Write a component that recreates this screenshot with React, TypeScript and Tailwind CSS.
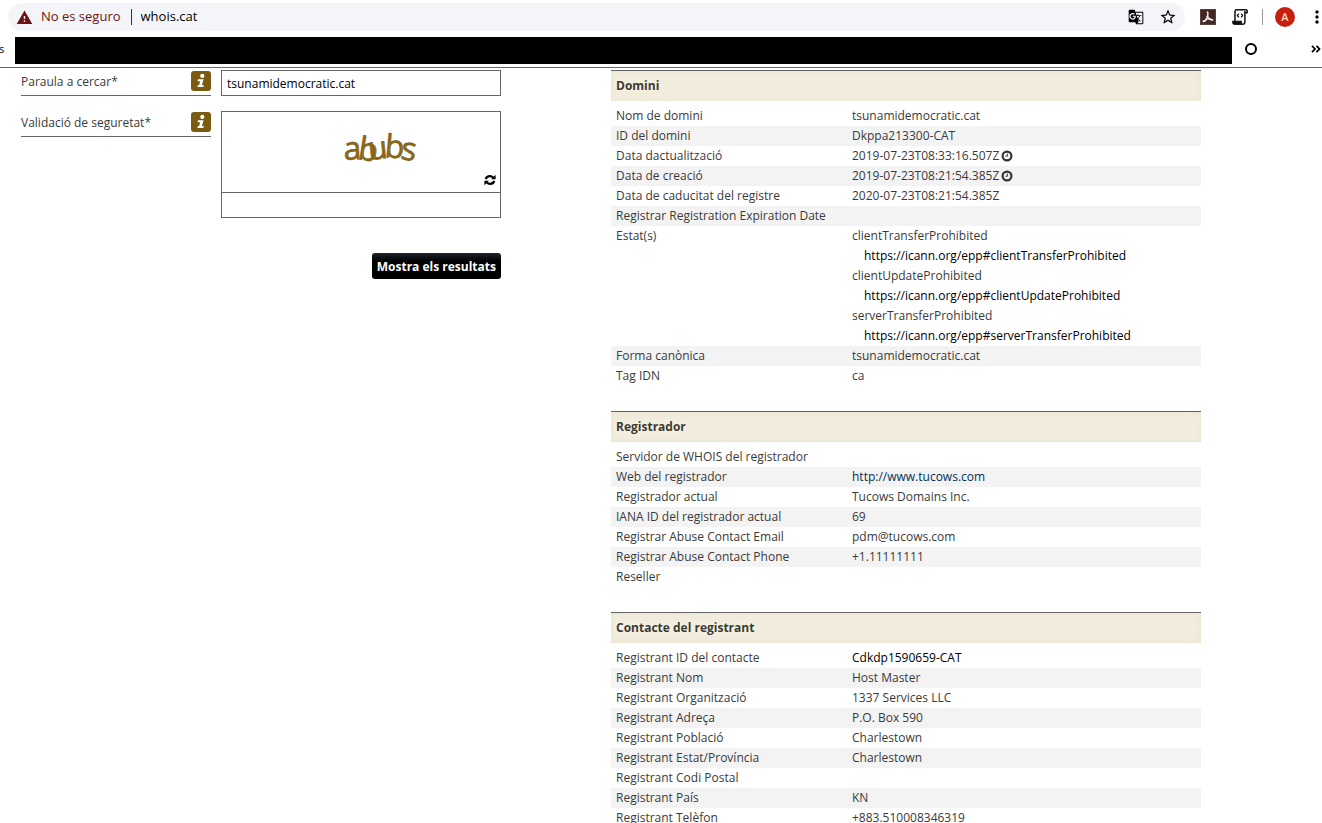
import { useState } from "react";
import type { ReactNode } from "react";
import { MdWarning, MdGTranslate, MdStarBorder, MdMoreVert } from "react-icons/md";

type Row = { label: string; value?: ReactNode };

function ClockIcon() {
  return (
    <svg viewBox="0 0 12 12" className="size-3" fill="none" stroke="#333" aria-hidden="true">
      <circle cx="6" cy="6" r="4.4" strokeWidth="2.2" />
      <path d="M6.300 3.600v2.700H4.400" strokeWidth="1" />
    </svg>
  );
}

function Stamp({ children }: { children: ReactNode }) {
  return (
    <span className="flex items-center gap-[2px]">
      {children}
      <ClockIcon />
    </span>
  );
}

function Status({ names }: { names: string[] }) {
  return (
    <ul>
      {names.map((name) => (
        <li key={name}>
          {name}
          <a className="block pl-3 text-black" href={`https://icann.org/epp#${name}`}>
            https://icann.org/epp#{name}
          </a>
        </li>
      ))}
    </ul>
  );
}

const domain: Row[] = [
  { label: "Nom de domini", value: "tsunamidemocratic.cat" },
  { label: "ID del domini", value: "Dkppa213300-CAT" },
  { label: "Data dactualització", value: <Stamp>2019-07-23T08:33:16.507Z</Stamp> },
  { label: "Data de creació", value: <Stamp>2019-07-23T08:21:54.385Z</Stamp> },
  { label: "Data de caducitat del registre", value: "2020-07-23T08:21:54.385Z" },
  { label: "Registrar Registration Expiration Date" },
  {
    label: "Estat(s)",
    value: (
      <Status names={["clientTransferProhibited", "clientUpdateProhibited", "serverTransferProhibited"]} />
    ),
  },
  { label: "Forma canònica", value: "tsunamidemocratic.cat" },
  { label: "Tag IDN", value: "ca" },
];

const registrar: Row[] = [
  { label: "Servidor de WHOIS del registrador" },
  {
    label: "Web del registrador",
    value: (
      <a className="text-[#062f52]" href="http://www.tucows.com">
        http://www.tucows.com
      </a>
    ),
  },
  { label: "Registrador actual", value: "Tucows Domains Inc." },
  { label: "IANA ID del registrador actual", value: "69" },
  { label: "Registrar Abuse Contact Email", value: "pdm@tucows.com" },
  { label: "Registrar Abuse Contact Phone", value: "+1.11111111" },
  { label: "Reseller" },
];

const registrant: Row[] = [
  {
    label: "Registrant ID del contacte",
    value: (
      <a className="text-black" href="#contacte">
        Cdkdp1590659-CAT
      </a>
    ),
  },
  { label: "Registrant Nom", value: "Host Master" },
  { label: "Registrant Organització", value: "1337 Services LLC" },
  { label: "Registrant Adreça", value: "P.O. Box 590" },
  { label: "Registrant Població", value: "Charlestown" },
  { label: "Registrant Estat/Província", value: "Charlestown" },
  { label: "Registrant Codi Postal" },
  { label: "Registrant País", value: "KN" },
  { label: "Registrant Telèfon", value: "+883.510008346319" },
];

function Section({ title, rows }: { title: string; rows: Row[] }) {
  return (
    <section className="pb-[25px]">
      <h2 className="mb-[5px] border-t border-[#666] bg-[#f2ecdd] px-[5px] text-[12px] leading-[30px] font-bold text-[#3c3a36] shadow-[inset_0_0_5px_#e8e3cd] [text-shadow:0_0_5px_#fffbe0]">
        {title}
      </h2>
      <table className="w-full table-fixed border-collapse text-left">
        <tbody>
          {rows.map((row) => (
            <tr key={row.label} className="align-top even:bg-[#f3f3f3]">
              <th scope="row" className="w-[236px] px-[5px] font-normal whitespace-nowrap">
                {row.label}
              </th>
              <td className="h-5 px-[5px]">{row.value}</td>
            </tr>
          ))}
        </tbody>
      </table>
    </section>
  );
}

function InfoButton({ label }: { label: string }) {
  return (
    <button type="button" aria-label={label} className="size-5 rounded-[3px] bg-[#7b5a12]">
      <svg viewBox="0 0 20 20" className="size-5" fill="#fff" aria-hidden="true">
        <circle cx="11.3" cy="4.900" r="2.1" />
        <path d="M7 8.200h5.600l-1.700 5.900h1.900l-.5 2H6.400l.5-2h1.200l1.100-3.900H6.500z" />
      </svg>
    </button>
  );
}

function AcrobatIcon() {
  return (
    <svg viewBox="0 0 16 16" className="size-4" aria-hidden="true">
      <path fill="#5a403d" d="M0 0h16v16H0z" />
      <path fill="#432725" d="M1 1h14v14H1z" />
      <g fill="none" stroke="#f3eceb" strokeLinecap="round" strokeLinejoin="round">
        <path strokeWidth="1.500" d="M7.300 3c.9.100.7 2.400.1 4.700" />
        <path strokeWidth="1.700" d="M7.400 7.700C6.700 9.900 5 12.300 3.300 12.400" />
        <path strokeWidth="1.500" d="M7.500 7.700c1 1.800 3.500 3.500 5.200 3.200" />
        <path strokeWidth="1" d="M3.600 12c2-1.700 5.800-2.500 8.800-1.600" />
      </g>
    </svg>
  );
}

function ScriptIcon() {
  return (
    <svg viewBox="0 0 16 16" className="size-4" fill="none" stroke="#111" strokeLinejoin="round" aria-hidden="true">
      <path strokeWidth="1.500" d="M3 12V2.500C3 1.400 3.700.8 4.700.8h9.300c.8 0 1.200.6 1.200 1.300v1.600H13" />
      <path strokeWidth="1.500" d="M12.900 2v10.800c0 1.500-.6 2.400-1.800 2.400" />
      <path fill="#111" strokeWidth="1" d="M.6 12.200h9v1.300c0 .9.500 1.600 1.300 1.900H2.400c-1.100 0-1.800-.8-1.800-2z" />
      <path strokeWidth="1.200" d="M6.900 4.700 5.300 6.500l1.600 1.800M9.100 4.700l1.600 1.800-1.600 1.800" />
    </svg>
  );
}

function RefreshIcon() {
  return (
    <svg viewBox="0 0 12 12" className="size-3" aria-hidden="true">
      <path fill="none" stroke="#000" strokeWidth="2.300" d="M1.700 5C2.300 3.300 4 2.200 5.900 2.200c1.300 0 2.400.5 3.200 1.400M10.300 7C9.700 8.700 8 9.800 6.100 9.800c-1.300 0-2.400-.5-3.200-1.400" />
      <path d="M11.600.8v4.500H7.100zM.4 11.200V6.700h4.500z" />
    </svg>
  );
}

function MoreIcon() {
  return (
    <svg viewBox="0 0 10 8" className="h-2 w-[10px]" fill="none" stroke="#000" strokeWidth="1.800" aria-hidden="true">
      <path d="m1 .8 3 3.200-3 3.200M5.500.8l3 3.200-3 3.200" />
    </svg>
  );
}

function Toolbar() {
  return (
    <header className="border-b border-[#666] font-['Open_Sans','Noto_Sans',sans-serif] text-[13px]">
      <div className="flex h-[34px] items-center pl-2">
        <div className="flex h-[28px] min-w-0 flex-1 items-center rounded-full bg-[#f3f5f8] px-2">
          <MdWarning className="size-[17px] text-[#6d1212]" aria-hidden="true" />
          <span className="ml-2 text-[#6d1212]">No es seguro</span>
          <span className="mr-[9px] ml-[10px] h-4 w-px bg-[#333]" />
          <input
            aria-label="Adreça"
            defaultValue="whois.cat"
            className="min-w-0 flex-1 bg-transparent text-black outline-none"
          />
          <button type="button" aria-label="Tradueix" className="mr-[15px]">
            <MdGTranslate className="size-4 text-black" />
          </button>
          <button type="button" aria-label="Afegeix a favorits">
            <MdStarBorder className="size-[18px] text-black" />
          </button>
        </div>
        <button type="button" aria-label="Acrobat" className="ml-[15px]">
          <AcrobatIcon />
        </button>
        <button type="button" aria-label="Scripts" className="ml-4">
          <ScriptIcon />
        </button>
        <span className="mr-3 ml-[14px] h-4 w-px bg-[#999]" />
        <button
          type="button"
          aria-label="Compte"
          className="flex size-5 items-center justify-center rounded-full bg-[#c81e0f] text-[11px] font-semibold text-[#fbdcb8]"
        >
          A
        </button>
        <button type="button" aria-label="Menú" className="-mr-[5px] ml-3">
          <MdMoreVert className="size-5 text-black" />
        </button>
      </div>
      <nav aria-label="Adreces d'interès" className="flex h-[33px] items-center pr-px">
        <span className="flex w-[15px] pb-1 text-[11px] leading-4 text-black">
          <span className="-ml-px">s</span>
        </span>
        <div className="mb-px h-[27px] flex-1 bg-black" />
        <span className="mb-[3px] ml-[13px] size-3 rounded-full border-2 border-black" />
        <button type="button" aria-label="Més adreces" className="flex w-16 justify-end pb-1">
          <MoreIcon />
        </button>
      </nav>
    </header>
  );
}

function Captcha() {
  return (
    <svg viewBox="0 0 80 44" className="h-11 w-20 overflow-visible" role="img" aria-label="abubs">
      <text
        className="font-['Open_Sans',sans-serif] text-[32px]"
        fill="#96690c"
        stroke="#6f5a26"
        strokeWidth="0.600"
        x="3 16 28 43 59"
        y="36 35 36 33 35"
        rotate="-3 9 -6 5 8"
      >
        abubs
      </text>
    </svg>
  );
}

function SearchForm() {
  const [query, setQuery] = useState("tsunamidemocratic.cat");
  return (
    <form className="w-[480px] shrink-0" onSubmit={(event) => event.preventDefault()}>
      <div className="mb-[15px] flex gap-[10px]">
        <div className="flex h-[26px] w-[190px] items-start justify-between border-b border-[#666] pt-px">
          <label htmlFor="query" className="leading-[22px]">
            Paraula a cercar*
          </label>
          <InfoButton label="Ajuda: paraula a cercar" />
        </div>
        <input
          id="query"
          value={query}
          onChange={(event) => setQuery(event.target.value)}
          className="h-[26px] min-w-0 flex-1 border border-[#666] px-[5px] pt-px text-black"
        />
      </div>
      <div className="flex items-start gap-[10px]">
        <div className="flex h-[26px] w-[190px] items-start justify-between border-b border-[#666] pt-px">
          <label htmlFor="code" className="leading-[22px]">
            Validació de seguretat*
          </label>
          <InfoButton label="Ajuda: validació de seguretat" />
        </div>
        <div className="min-w-0 flex-1 border border-[#666]">
          <div className="relative flex h-20 justify-center pt-3 pl-10">
            <Captcha />
            <button type="button" aria-label="Canvia la imatge" className="absolute right-[4px] bottom-[6px]">
              <RefreshIcon />
            </button>
          </div>
          <input id="code" className="block h-[25px] w-full border-t border-[#666] px-[5px] text-black" />
        </div>
      </div>
      <div className="mt-[35px] flex justify-end">
        <button
          type="submit"
          className="h-[26px] rounded-[3px] bg-linear-to-b from-[#22242b] to-black to-50% px-[5px] pt-px font-bold text-white"
        >
          Mostra els resultats
        </button>
      </div>
    </form>
  );
}

export default function App() {
  return (
    <div className="flex h-screen flex-col overflow-hidden bg-white">
      <Toolbar />
      <main className="flex min-h-0 flex-1 items-start gap-[110px] overflow-auto pt-[2px] pl-[21px] font-['Open_Sans','Noto_Sans',sans-serif] text-[12px] leading-5 text-[#3a3a3a] [scrollbar-width:none]">
        <SearchForm />
        <div className="w-full max-w-[590px]">
          <Section title="Domini" rows={domain} />
          <Section title="Registrador" rows={registrar} />
          <Section title="Contacte del registrant" rows={registrant} />
        </div>
      </main>
    </div>
  );
}
